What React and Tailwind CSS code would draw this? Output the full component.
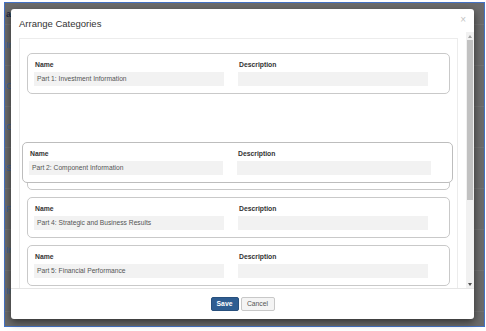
const FONT = { fontFamily: '"Liberation Sans", Arial, sans-serif' };

function Field({ label, value, colW, inputW }) {
  return (
    <div style={{ width: colW }}>
      <div className="pl-[1px] text-[6.8px] font-bold leading-[8px] text-[#333]">{label}</div>
      <div
        className="mt-[3px] h-[14px] bg-[#f2f2f2] pl-[3px] text-[6.7px] leading-[14px] text-[#555] whitespace-nowrap overflow-hidden"
        style={{ width: inputW }}
      >
        {value}
      </div>
    </div>
  );
}

function Card({ value, wide }) {
  const colW = wide ? 208 : 204;
  const inputW = wide ? 194 : 190;
  return (
    <div className="flex h-[41px] rounded-[5px] border border-[#c9c9c9] bg-white pl-[6px] pt-[7px]">
      <Field label="Name" value={value} colW={colW} inputW={inputW} />
      <Field label="Description" value="" colW={colW} inputW={inputW} />
    </div>
  );
}

export default function App() {
  const rows = ['In', 'Cc', 'Ci', 'St', 'Fi', 'In', 'In'];
  return (
    <div className="relative h-[331px] w-[486px] overflow-hidden bg-white" style={FONT}>
      {/* background page dimmed by overlay */}
      <div className="ml-[4px] mt-[2px] h-[325px] w-[481px] overflow-hidden border border-[#4472c4] bg-[#6b6b6b]">
        <div className="h-[22px] border-b border-[#737373] pl-[1px] text-[9px] font-bold leading-[22px] text-[#1e2a44]">
          a
        </div>
        {rows.map((r, i) => (
          <div
            key={i}
            className="h-[41px] border-b border-[#737373] pl-[1px] text-[9px] leading-[41px] text-[#41649c]"
          >
            {r}
          </div>
        ))}
      </div>

      {/* modal */}
      <div className="absolute left-[11px] top-[9px] flex h-[310px] w-[463px] flex-col rounded-[3px] bg-white shadow-[0_3px_8px_rgba(0,0,0,0.55)]">
        <div className="relative h-[23px] pl-[8px] pt-[9px] text-[9.5px] leading-[11px] text-[#333]">
          Arrange Categories
          <span className="absolute right-[8px] top-[6px] text-[10px] leading-[10px] text-[#c4c4c4]">×</span>
        </div>

        <div className="flex h-[256px]">
          <div className="flex-1 overflow-hidden px-[8px] pt-[6px]">
            <div className="relative h-[300px] border border-[#ececec] px-[7px] pt-[14px]">
              <div className="flex flex-col gap-[7px]">
                <Card value="Part 1: Investment Information" />
                <div className="h-[41px]" />
                <Card value="Part 3: Strategic Review" />
                <Card value="Part 4: Strategic and Business Results" />
                <Card value="Part 5: Financial Performance" />
              </div>
              <div className="absolute left-[2px] top-[103px] w-[431px]">
                <div className="flex h-[41px] rounded-[5px] border border-[#bdbdbd] bg-white pl-[6px] pt-[7px]">
                  <Field label="Name" value="Part 2: Component Information" colW={208} inputW={194} />
                  <Field label="Description" value="" colW={208} inputW={194} />
                </div>
              </div>
            </div>
          </div>
          {/* scrollbar */}
          <div className="flex w-[8px] flex-col bg-[#f1f1f1]">
            <div className="flex h-[8px] items-center justify-center">
              <div className="h-0 w-0 border-x-[2.5px] border-b-[3px] border-x-transparent border-b-[#a3a3a3]" />
            </div>
            <div className="mx-[1px] h-[160px] bg-[#c1c1c1]" />
            <div className="flex-1" />
            <div className="flex h-[8px] items-center justify-center">
              <div className="h-0 w-0 border-x-[2.5px] border-t-[3px] border-x-transparent border-t-[#505050]" />
            </div>
          </div>
        </div>

        <div className="flex h-[31px] justify-center gap-[2px] border-t border-[#e5e5e5] pt-[8px]">
          <div className="flex h-[14px] w-[28px] items-center justify-center rounded-[2px] border border-[#28507d] bg-[#2f5d91] text-[6.8px] font-bold text-white">
            Save
          </div>
          <div className="flex h-[14px] w-[34px] items-center justify-center rounded-[2px] border border-[#c8c8c8] bg-[#f4f4f4] text-[6.8px] text-[#555]">
            Cancel
          </div>
        </div>
      </div>
    </div>
  );
}
